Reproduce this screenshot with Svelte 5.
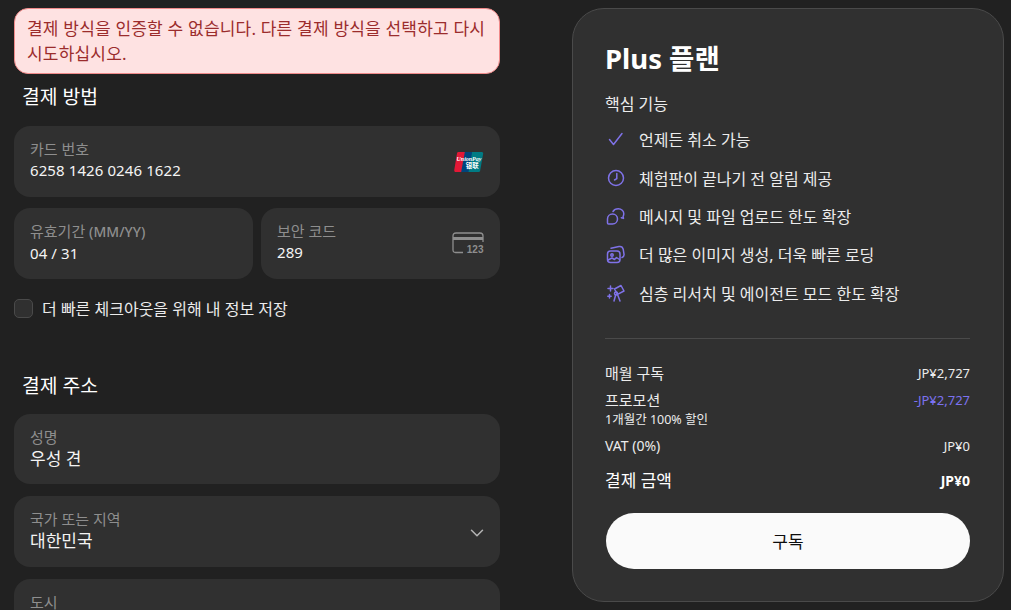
<script>
  const features = [
    { icon: 'check', text: '언제든 취소 가능' },
    { icon: 'clock', text: '체험판이 끝나기 전 알림 제공' },
    { icon: 'chat', text: '메시지 및 파일 업로드 한도 확장' },
    { icon: 'image', text: '더 많은 이미지 생성, 더욱 빠른 로딩' },
    { icon: 'scope', text: '심층 리서치 및 에이전트 모드 한도 확장' }
  ];
</script>

<div class="page">
  <section class="form">
    <div class="alert">결제 방식을 인증할 수 없습니다. 다른 결제 방식을 선택하고 다시 시도하십시오.</div>

    <h2 class="first">결제 방법</h2>
    <div class="field">
      <div>
        <div class="label">카드 번호</div>
        <div class="value">6258 1426 0246 1622</div>
      </div>
      <svg class="unionpay" width="31" height="22" viewBox="0 0 32 24">
        <path d="M5 1h10L11 23H2.500Q0 23 .5 20.500L3.500 2.500Q3.800 1 5 1z" fill="#e21836" />
        <path d="M12 1h10l-4 22H8z" fill="#00447c" />
        <path d="M20 1h10.500Q32.300 1 32 3l-3.300 18.500Q28.400 23 27 23H16z" fill="#007b84" />
        <text class="up1" x="16.500" y="10.500" text-anchor="middle">UnionPay</text>
        <text class="up2" x="20" y="18" text-anchor="middle">银联</text>
      </svg>
    </div>
    <div class="row">
      <div class="field">
        <div>
          <div class="label">유효기간 <b>(MM/YY)</b></div>
          <div class="value">04 / 31</div>
        </div>
      </div>
      <div class="field">
        <div>
          <div class="label">보안 코드</div>
          <div class="value">289</div>
        </div>
        <svg class="cvc" width="32" height="22" viewBox="0 0 32 22">
          <path d="M11 20.500H3.500Q1 20.500 1 18V4Q1 1 4 1h24q3 0 3 3v6" fill="none" stroke="#8e8e8e" stroke-width="1.300" />
          <path d="M1 6.500h30" stroke="#8e8e8e" stroke-width="3" />
          <text x="31.500" y="20.500" text-anchor="end">123</text>
        </svg>
      </div>
    </div>
    <label class="save">
      <span class="box"></span>
      더 빠른 체크아웃을 위해 내 정보 저장
    </label>

    <h2 class="second">결제 주소</h2>
    <div class="stack">
      <div class="field">
        <div>
          <div class="label">성명</div>
          <div class="value kr">우성 견</div>
        </div>
      </div>
      <div class="field">
        <div>
          <div class="label">국가 또는 지역</div>
          <div class="value kr">대한민국</div>
        </div>
        <svg class="chevron" width="14" height="8" viewBox="0 0 14 8">
          <path d="M1.500 1.200 7 6.700l5.500-5.500" fill="none" stroke="#b4b4b4" stroke-width="1.500" stroke-linecap="round" stroke-linejoin="round" />
        </svg>
      </div>
      <div class="field">
        <div>
          <div class="label">도시</div>
        </div>
      </div>
    </div>
  </section>

  <aside class="plan">
    <h1>Plus 플랜</h1>
    <div class="core">핵심 기능</div>
    <ul>
      {#each features as f}
        <li>
          <svg width="20" height="20" viewBox="0 0 20 20" fill="none" stroke="#7f72e8" stroke-width="1.500" stroke-linecap="round" stroke-linejoin="round">
            {#if f.icon === 'check'}
              <path d="M3.500 10.500 7.500 15.500 16 4.500" />
            {:else if f.icon === 'clock'}
              <circle cx="10" cy="10" r="7.500" />
              <path d="M10.800 5.500v5.200L8.500 12" />
            {:else if f.icon === 'chat'}
              <path d="M1.500 13c0-2.800 2.200-5 5-5s5 2.200 5 5-2.200 5-5 5H2.500c-.7 0-1-.4-1-1z" />
              <path d="M7 5.500C8 3.800 10 2.800 12.300 2.800c3.200 0 5.500 2.300 5.500 5 0 1-.2 1.800-.7 2.600l.4 2-2.200-.6" />
            {:else if f.icon === 'image'}
              <rect x="1.500" y="7" width="12.500" height="11.500" rx="3" />
              <path d="M5 4.200 13 2.500c2.200-.4 3.700.8 4.200 2.700l.8 5c.2 1.500-.5 2.800-2 3.300" />
              <circle cx="6" cy="11" r="1.200" />
              <path d="M2 16l4-2 2.500 1.500 2-2 3 2" />
            {:else}
              <path d="M8.500 6 15 2.500l3 5.500-6.500 3.300z" />
              <path d="M9.800 11.500 8 18M11.500 11.500l2.500 6.500" />
              <circle cx="10" cy="10.500" r="1.500" />
              <path d="M4.500 3v5M2 5.500h5M3.500 11.500v3.500M1.800 13.200h3.400" />
            {/if}
          </svg>
          <span>{f.text}</span>
        </li>
      {/each}
    </ul>
    <hr />
    <div class="line"><span class="kr">매월 구독</span><span>JP¥2,727</span></div>
    <div class="line promo"><span class="kr">프로모션</span><span class="minus">-JP¥2,727</span></div>
    <div class="note">1개월간 100% 할인</div>
    <div class="line vat"><span class="vat-name">VAT (0%)</span><span>JP¥0</span></div>
    <div class="line total"><span>결제 금액</span><strong>JP¥0</strong></div>
    <button>구독</button>
  </aside>
</div>

<style>
  :global(body) {
    background: #212121;
    overflow: hidden;
  }

  .page {
    display: flex;
    align-items: flex-start;
    gap: 72px;
    height: 610px;
    padding: 8px 7px 0 14px;
    box-sizing: border-box;
    overflow: hidden;
    font-family: "Noto Sans", "Noto Sans CJK KR", sans-serif;
    color: #ececec;
  }

  .form {
    width: 486px;
    flex: none;
  }

  .alert {
    box-sizing: border-box;
    height: 66px;
    padding: 8px 12px;
    background: #fee2e2;
    border: 1px solid #f08a8a;
    border-radius: 14px;
    color: #9b2c2c;
    font-size: 17px;
    line-height: 24.500px;
    letter-spacing: 0.200px;
    word-break: keep-all;
  }

  h2 {
    margin: 0 0 0 8px;
    font-size: 19.300px;
    font-weight: 400;
    line-height: 24px;
    color: #fff;
  }

  .first {
    margin-top: 11px;
    margin-bottom: 17px;
  }

  .second {
    margin-top: 55px;
    margin-bottom: 16px;
  }

  .field {
    box-sizing: border-box;
    height: 70.500px;
    padding: 13px 16px 0;
    background: #303030;
    border-radius: 16px;
    display: flex;
    justify-content: space-between;
    align-items: flex-start;
  }

  .label {
    font-size: 15px;
    line-height: 20px;
    color: #8e8e8e;
  }

  .label b {
    font-size: 14px;
    font-weight: 500;
  }

  .value {
    font-size: 15px;
    line-height: 23px;
    letter-spacing: 0.100px;
    color: #f4f4f4;
  }

  .value.kr {
    font-size: 17px;
    letter-spacing: 0;
  }

  .unionpay {
    margin: 12px 0 0;
  }

  .up1 {
    font: italic 700 6.500px "Liberation Serif", serif;
    fill: #fff;
  }

  .up2 {
    font: 700 7px "Noto Sans CJK SC", sans-serif;
    fill: #fff;
  }

  .cvc {
    margin-top: 11px;
  }

  .cvc text {
    font: 700 10px "Liberation Sans", sans-serif;
    fill: #8e8e8e;
  }

  .chevron {
    margin-top: 20px;
  }

  .row {
    display: grid;
    grid-template-columns: 239px 239px;
    gap: 8px;
    margin-top: 11.500px;
  }

  .save {
    display: flex;
    align-items: center;
    gap: 9px;
    margin-top: 20px;
    font-size: 16px;
    line-height: 20px;
    color: #ececec;
  }

  .box {
    box-sizing: border-box;
    width: 19px;
    height: 19px;
    background: #303030;
    border: 1px solid #4a4a4a;
    border-radius: 5px;
  }

  .stack {
    display: flex;
    flex-direction: column;
    gap: 12px;
  }

  .plan {
    box-sizing: border-box;
    flex: none;
    width: 432px;
    height: 594px;
    padding: 31px 33px 0 32px;
    background: #303030;
    border: 1px solid #4a4a4a;
    border-radius: 32px;
  }

  h1 {
    margin: 0;
    font-size: 27.500px;
    line-height: 38px;
    font-weight: 700;
    color: #fff;
  }

  .core {
    margin-top: 16px;
    font-size: 16px;
    line-height: 20px;
    color: #ececec;
  }

  ul {
    list-style: none;
    margin: 6px 0 0;
    padding: 0 0 0 1px;
  }

  li {
    display: flex;
    align-items: center;
    gap: 13px;
    height: 38.400px;
    font-size: 16px;
  }

  hr {
    border: none;
    border-top: 1px solid #4a4a4a;
    margin: 26px 0 0;
  }

  .line {
    display: flex;
    justify-content: space-between;
    align-items: center;
    font-size: 13px;
    line-height: 20px;
    color: #ececec;
  }

  .line .kr {
    font-size: 15px;
  }

  .vat-name {
    font-size: 14px;
  }

  hr + .line {
    margin-top: 24px;
  }

  .promo {
    margin-top: 7px;
  }

  .minus {
    color: #7c72f0;
  }

  .note {
    font-size: 12.500px;
    line-height: 20px;
    color: #ececec;
  }

  .vat {
    margin-top: 6px;
  }

  .total {
    margin-top: 13px;
    font-size: 17px;
    line-height: 24px;
    color: #fff;
  }

  .total strong {
    font-size: 14px;
    font-weight: 700;
  }

  button {
    display: block;
    width: 364px;
    height: 56px;
    margin: 20px 0 0 1px;
    border: none;
    border-radius: 28px;
    background: #fafafa;
    color: #0d0d0d;
    font: inherit;
    font-size: 17px;
  }
</style>
